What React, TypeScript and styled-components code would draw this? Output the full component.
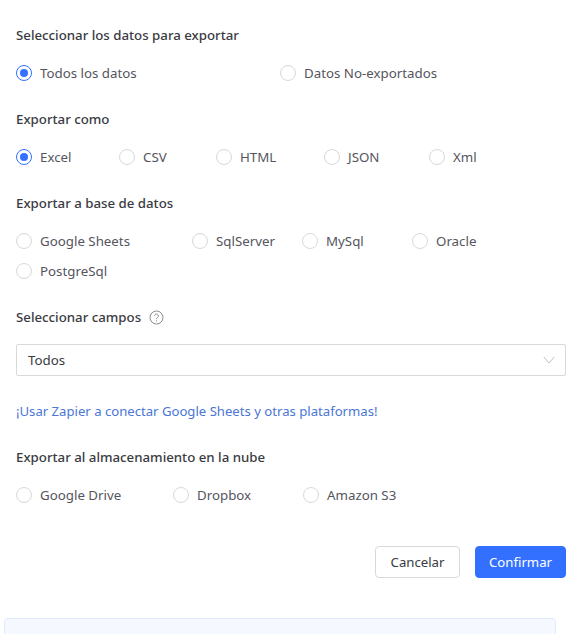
import React from "react";
import styled, { createGlobalStyle } from "styled-components";

const Global = createGlobalStyle`
  html, body { margin: 0; padding: 0; background: #fff; }
  body { font-family: "Noto Sans", "Open Sans", sans-serif; }
`;
const Page = styled.div`
  width: 570px; height: 634px; overflow: hidden; box-sizing: border-box; padding: 0 4px 0 16px; position: relative;
`;
const Title = styled.div<{ $top: number }>`
  display: flex; align-items: center; gap: 8px; height: 20px; font-size: 13.25px; font-weight: 500; color: #3a3a42;
  margin-top: ${(p) => p.$top}px;
`;
const Row = styled.div<{ $top: number }>`
  display: flex; flex-wrap: wrap; row-gap: 10px; margin-top: ${(p) => p.$top}px;
`;
const Option = styled.label<{ $w: number }>`
  display: flex; align-items: center; gap: 8px; width: ${(p) => p.$w}px; height: 20px; font-size: 13.3px; color: #55555e;
`;
const Dot = styled.span<{ $on?: boolean }>`
  width: 16px; height: 16px; box-sizing: border-box; border-radius: 50%; flex: none; background: #fff;
  border: 1px solid ${(p) => (p.$on ? "#3370ff" : "#d9d9d9")};
  display: flex; align-items: center; justify-content: center;
  &::after { content: ""; width: 8px; height: 8px; border-radius: 50%; background: ${(p) => (p.$on ? "#3370ff" : "transparent")}; }
`;
const Select = styled.div`
  width: 550px; height: 32px; box-sizing: border-box; margin-top: 17px; border: 1px solid #d9d9d9; border-radius: 2px;
  display: flex; align-items: center; justify-content: space-between; padding: 0 10px 0 11px; font-size: 13.3px; color: #3a3a42;
`;
const LinkText = styled.a`
  display: block; margin-top: 25px; height: 20px; line-height: 20px; font-size: 13.13px; color: #4a76d6; white-space: nowrap;
`;
const Actions = styled.div`
  display: flex; justify-content: flex-end; gap: 15px; width: 550px; margin-top: 41px;
`;
const Button = styled.button<{ $primary?: boolean }>`
  height: 32px; box-sizing: border-box; border-radius: 4px; font: inherit; font-size: 13.2px; padding: 0;
  width: ${(p) => (p.$primary ? 91 : 85)}px;
  background: ${(p) => (p.$primary ? "#3370ff" : "#fff")};
  color: ${(p) => (p.$primary ? "#fff" : "#3a3a42")};
  border: 1px solid ${(p) => (p.$primary ? "#3370ff" : "#d9d9d9")};
`;
const Notice = styled.div`
  position: absolute; left: 4px; top: 618px; width: 552px; height: 40px; box-sizing: border-box;
  background: #f5f8ff; border: 1px solid #e1eafa; border-radius: 4px;
`;

const Opt = ({ w, on, children }: { w: number; on?: boolean; children: React.ReactNode }) => (
  <Option $w={w}><Dot $on={on} />{children}</Option>
);

export default function App() {
  return (
    <Page>
      <Global />
      <Title $top={25}>Seleccionar los datos para exportar</Title>
      <Row $top={18}>
        <Opt w={264} on>Todos los datos</Opt>
        <Opt w={200}>Datos No-exportados</Opt>
      </Row>
      <Title $top={26}>Exportar como</Title>
      <Row $top={18}>
        <Opt w={103} on>Excel</Opt>
        <Opt w={97}>CSV</Opt>
        <Opt w={108}>HTML</Opt>
        <Opt w={105}>JSON</Opt>
        <Opt w={70}>Xml</Opt>
      </Row>
      <Title $top={26}>Exportar a base de datos</Title>
      <Row $top={18}>
        <Opt w={176}>Google Sheets</Opt>
        <Opt w={110}>SqlServer</Opt>
        <Opt w={110}>MySql</Opt>
        <Opt w={120}>Oracle</Opt>
        <Opt w={120}>PostgreSql</Opt>
      </Row>
      <Title $top={26}>
        Seleccionar campos
        <svg width="15" height="15" viewBox="0 0 15 15" fill="none" stroke="#8c8c8c" strokeWidth="1">
          <circle cx="7.5" cy="7.5" r="6.5" />
          <path d="M5.6 5.9a1.9 1.9 0 1 1 2.9 1.6c-.7.4-1 .8-1 1.6" />
          <path d="M7.5 10.3v1" />
        </svg>
      </Title>
      <Select>
        Todos
        <svg width="12" height="8" viewBox="0 0 12 8" fill="none" stroke="#bfbfbf" strokeWidth="1">
          <path d="M.8 1l5.2 6 5.2-6" />
        </svg>
      </Select>
      <LinkText>¡Usar Zapier a conectar Google Sheets y otras plataformas!</LinkText>
      <Title $top={26}>Exportar al almacenamiento en la nube</Title>
      <Row $top={18}>
        <Opt w={157}>Google Drive</Opt>
        <Opt w={130}>Dropbox</Opt>
        <Opt w={120}>Amazon S3</Opt>
      </Row>
      <Actions>
        <Button>Cancelar</Button>
        <Button $primary>Confirmar</Button>
      </Actions>
      <Notice />
    </Page>
  );
}
